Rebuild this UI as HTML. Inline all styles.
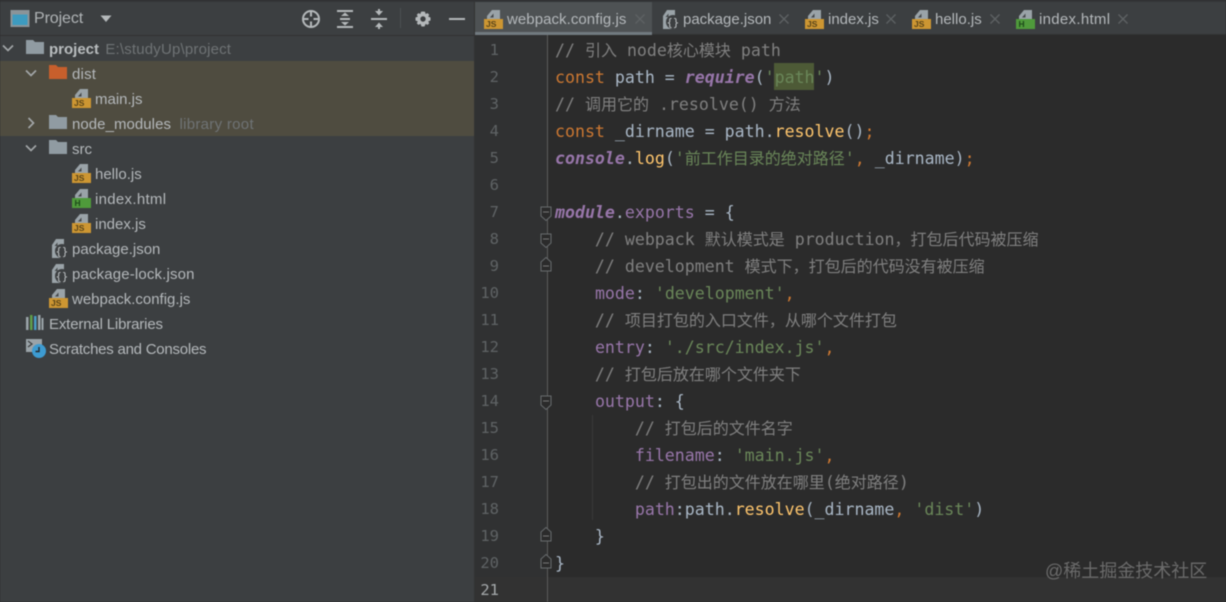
<!DOCTYPE html>
<html lang="zh"><head><meta charset="utf-8"><title>webpack.config.js</title>
<style>
html,body{margin:0;padding:0;background:#2b2b2b}
#r{position:relative;width:1226px;height:602px;overflow:hidden;background:#2b2b2b;font-family:"Liberation Sans","Noto Sans CJK SC",sans-serif;filter:blur(.4px)}
.a{position:absolute}
.t{position:absolute;font-size:15px;line-height:20px;color:#b4b8bb;white-space:nowrap}
.g{color:#6f7375}
.ic{position:absolute;width:20px;height:20px}
.tab{position:absolute;top:5px;font-size:15px;line-height:30px;color:#b4b8bb;white-space:nowrap}
.x{position:absolute;top:13px;width:12px;height:12px}
.l{position:absolute;left:555px;height:27px;line-height:27px;font-family:"DejaVu Sans Mono","Liberation Mono",monospace;font-size:16.58px;white-space:pre;color:#a9b7c6}
.l i{font-family:"Noto Sans CJK SC",sans-serif;font-size:16px;font-style:normal;line-height:0}
.n{position:absolute;left:475px;width:24px;text-align:right;height:27px;line-height:27px;font-family:"DejaVu Sans Mono",monospace;font-size:15.5px;color:#5f6365}
.c{color:#808080}.k{color:#cc7832}.s{color:#6a8759}.p{color:#9876aa}.f{color:#ffc66d}
.b{font-weight:bold;font-style:italic;color:#9876aa}
</style></head><body><div id="r">
<svg width="0" height="0" style="position:absolute">
<defs>
<symbol id="js" viewBox="0 0 20 20"><path d="M4 10V7L9 1H17V10z" fill="#9aa3a8"/><path d="M7 8.500 10.500 4.500V8.500z" fill="#45484a"/><rect x="1" y="10" width="19" height="10" fill="#cd9632"/><text x="3" y="18" font-family="Liberation Sans" font-size="8.500" font-weight="bold" fill="#5a4519">JS</text></symbol>
<symbol id="ht" viewBox="0 0 20 20"><path d="M4 10V7L9 1H17V10z" fill="#9aa3a8"/><path d="M7 8.500 10.500 4.500V8.500z" fill="#45484a"/><rect x="1" y="10" width="19" height="10" fill="#4f9a3b"/><text x="3.500" y="18" font-family="Liberation Sans" font-size="8.500" font-weight="bold" fill="#1d4a1a">H</text></symbol>
<symbol id="js2" viewBox="0 0 20 20"><path d="M2 7 6 1H14V20H2z" fill="#9aa3a8"/><path d="M4.500 8 7.500 4.500V8z" fill="#45484a"/><circle cx="12" cy="13" r="7" fill="#3c3f41"/><text x="5.500" y="17" font-family="DejaVu Sans Mono" font-size="10.500" fill="#c4c8ca">{}</text></symbol>
<symbol id="fo" viewBox="0 0 20 20"><path d="M1 3h7l2 2h9v12H1z" fill="#909ba2"/></symbol>
<symbol id="xx" viewBox="0 0 12 12"><path d="M1.500 1.500 10.500 10.500M10.500 1.500 1.500 10.500" stroke="#5e6264" stroke-width="1.300"/></symbol>
<symbol id="dn" viewBox="0 0 12 12"><path d="M1 3.500 6 8.500 11 3.500" fill="none" stroke="#a4a8aa" stroke-width="1.600"/></symbol>
<symbol id="rt" viewBox="0 0 12 12"><path d="M3.500 1 8.500 6 3.500 11" fill="none" stroke="#a4a8aa" stroke-width="1.600"/></symbol>
<symbol id="fold" viewBox="0 0 14 18"><path d="M2 6 7 1.500 12 6V15H2z" fill="#2b2b2b" stroke="#686c6e" stroke-width="1"/><path d="M4 10H10" stroke="#777"/></symbol>
<symbol id="foldb" viewBox="0 0 14 18"><path d="M2 3H12V12L7 16.500 2 12z" fill="#2b2b2b" stroke="#686c6e" stroke-width="1"/><path d="M4 8H10" stroke="#777"/></symbol>
</defs></svg>

<!-- left panel -->
<div class="a" style="left:0;top:0;width:475px;height:602px;background:#3c3f41"></div>
<div class="a" style="left:0;top:0;width:1226px;height:2px;background:#333537"></div>
<div class="a" style="left:0;top:35px;width:475px;height:1px;background:#323232"></div>
<div class="a" style="left:0;top:61px;width:474px;height:75px;background:#4f4c40"></div>
<div class="a" style="left:474px;top:36px;width:1px;height:566px;background:#333"></div>
<div class="a" style="left:474px;top:2px;width:1px;height:33px;background:#333"></div>

<!-- header -->
<svg class="a" style="left:10px;top:9px" width="20" height="19"><rect x="1.500" y="2" width="17" height="15" fill="#3d9bc0" stroke="#8a9499" stroke-width="2"/><rect x="1" y="2" width="18" height="3.500" fill="#8a9499"/></svg>
<div class="t" style="left:34px;top:9px;font-size:16px;color:#b0b4b6;letter-spacing:-.1px">Project</div>
<svg class="a" style="left:100px;top:15px" width="12" height="8"><path d="M0.500 0.500H11.500L6 7z" fill="#b4b8ba"/></svg>
<svg class="a" style="left:301px;top:9px" width="20" height="20" fill="none" stroke="#b4b8ba" stroke-width="2"><circle cx="10" cy="10" r="8"/><path d="M10 2V7.500M10 12.500V18M2 10H7.500M12.500 10H18"/></svg>
<svg class="a" style="left:336px;top:9px" width="18" height="20" fill="#b4b8ba"><rect x="1" y="1" width="16" height="2"/><rect x="1" y="17" width="16" height="2"/><rect x="4" y="9" width="10" height="2"/><path d="M5 7 9 3.500 13 7zM5 13 9 16.500 13 13z"/></svg>
<svg class="a" style="left:370px;top:9px" width="18" height="20" fill="#b4b8ba"><rect x="1" y="9" width="16" height="2"/><path d="M5 2H13L9 6.500zM5 18H13L9 13.500z"/><rect x="8" y="0" width="2" height="3"/><rect x="8" y="17" width="2" height="3"/></svg>
<div class="a" style="left:400px;top:8px;width:1px;height:20px;background:#4c5052"></div>
<svg class="a" style="left:414px;top:10px" width="18" height="18"><path d="M9 1.500 11 1.800 11.600 4 13.600 3.100 15.200 4.700 14.200 6.600 16.500 7.500V10.500L14.200 11.400 15.200 13.300 13.600 14.900 11.600 13.900 10.500 16.500H7.500L6.500 13.900 4.400 14.900 2.800 13.300 3.800 11.400 1.500 10.500V7.500L3.800 6.600 2.800 4.700 4.400 3.100 6.400 4 7 1.800z" fill="#b4b8ba"/><circle cx="9" cy="9" r="2.700" fill="#3c3f41"/></svg>
<div class="a" style="left:449px;top:18px;width:16px;height:2px;background:#b4b8ba"></div>

<!-- tree -->
<svg class="ic" style="left:2px;top:42px;width:12px;height:12px"><use href="#dn"/></svg>
<svg class="ic" style="left:25px;top:37px"><use href="#fo"/></svg>
<div class="t" style="left:49px;top:40px"><b style="color:#b9bdbf">project</b>&nbsp; <span class="g" style="margin-left:-2px;letter-spacing:.18px">E:\studyUp\project</span></div>

<svg class="ic" style="left:25px;top:67px;width:12px;height:12px"><use href="#dn"/></svg>
<svg class="a" style="left:48px;top:62px" width="20" height="20"><path d="M1 3h7l2 2h9v12H1z" fill="#c75f2c"/></svg>
<div class="t" style="left:72px;top:65px;letter-spacing:.2px">dist</div>

<svg class="ic" style="left:71px;top:88px"><use href="#js"/></svg>
<div class="t" style="left:95px;top:90px">main.js</div>

<svg class="ic" style="left:25px;top:117px;width:12px;height:12px"><use href="#rt"/></svg>
<svg class="ic" style="left:48px;top:112px"><use href="#fo"/></svg>
<div class="t" style="left:72px;top:115px;letter-spacing:.05px">node_modules&nbsp; <span class="g" style="letter-spacing:.3px">library root</span></div>

<svg class="ic" style="left:25px;top:142px;width:12px;height:12px"><use href="#dn"/></svg>
<svg class="ic" style="left:48px;top:137px"><use href="#fo"/></svg>
<div class="t" style="left:72px;top:140px">src</div>

<svg class="ic" style="left:71px;top:163px"><use href="#js"/></svg>
<div class="t" style="left:95px;top:165px">hello.js</div>
<svg class="ic" style="left:71px;top:188px"><use href="#ht"/></svg>
<div class="t" style="left:95px;top:190px;letter-spacing:.3px">index.html</div>
<svg class="ic" style="left:71px;top:213px"><use href="#js"/></svg>
<div class="t" style="left:95px;top:215px">index.js</div>
<svg class="ic" style="left:50px;top:238px"><use href="#js2"/></svg>
<div class="t" style="left:72px;top:240px">package.json</div>
<svg class="ic" style="left:50px;top:263px"><use href="#js2"/></svg>
<div class="t" style="left:72px;top:265px;letter-spacing:.15px">package-lock.json</div>
<svg class="ic" style="left:48px;top:288px"><use href="#js"/></svg>
<div class="t" style="left:72px;top:290px">webpack.config.js</div>

<svg class="a" style="left:25px;top:314px" width="20" height="18"><rect x="1" y="3" width="2.500" height="13" fill="#9aa3a8"/><rect x="5" y="1" width="2.500" height="15" fill="#5f9e4a"/><rect x="9" y="2" width="2.500" height="14" fill="#4a9cc4"/><rect x="13" y="1" width="2.500" height="15" fill="#9aa3a8"/><rect x="16.500" y="4" width="2" height="12" fill="#9aa3a8"/></svg>
<div class="t" style="left:49px;top:315px;letter-spacing:-.16px">External Libraries</div>
<svg class="a" style="left:25px;top:338px" width="22" height="22"><path d="M1 1H17V9H8V14H1z" fill="#9aa3a8"/><path d="M3 3 7 6 3 9" fill="none" stroke="#3c3f41" stroke-width="1.200"/><circle cx="14" cy="13" r="7" fill="#3d9bd1"/><path d="M14 9V13.500H10.500" fill="none" stroke="#23292d" stroke-width="1.400"/></svg>
<div class="t" style="left:49px;top:340px;letter-spacing:-.24px">Scratches and Consoles</div>

<!-- tab bar -->
<div class="a" style="left:475px;top:2px;width:751px;height:33px;background:#3c3f41"></div>
<div class="a" style="left:475px;top:2px;width:177px;height:30px;background:#4e5254"></div>
<div class="a" style="left:475px;top:32px;width:177px;height:3px;background:#717a80"></div>
<div class="a" style="left:652px;top:34px;width:574px;height:1px;background:#323232"></div>

<svg class="ic" style="left:483px;top:9px"><use href="#js"/></svg>
<div class="tab" style="left:507px;letter-spacing:.06px">webpack.config.js</div>
<svg class="x" style="left:634px"><use href="#xx"/></svg>
<svg class="ic" style="left:661px;top:9px"><use href="#js2"/></svg>
<div class="tab" style="left:683px">package.json</div>
<svg class="x" style="left:778px"><use href="#xx"/></svg>
<svg class="ic" style="left:804px;top:9px"><use href="#js"/></svg>
<div class="tab" style="left:828px">index.js</div>
<svg class="x" style="left:885px"><use href="#xx"/></svg>
<svg class="ic" style="left:911px;top:9px"><use href="#js"/></svg>
<div class="tab" style="left:935px">hello.js</div>
<svg class="x" style="left:989px"><use href="#xx"/></svg>
<svg class="ic" style="left:1015px;top:9px"><use href="#ht"/></svg>
<div class="tab" style="left:1039px;letter-spacing:.3px">index.html</div>
<svg class="x" style="left:1117px"><use href="#xx"/></svg>

<!-- gutter -->
<div class="a" style="left:475px;top:35px;width:72px;height:567px;background:#303132"></div>
<div class="a" style="left:475px;top:577px;width:751px;height:25px;background:#323232"></div>
<div class="a" style="left:547px;top:35px;width:1px;height:567px;background:#5c5c5c"></div>
<div class="a" style="left:592px;top:415px;width:1px;height:105px;background:#383838"></div>

<div class="n" style="top:37px">1</div><div class="n" style="top:64px">2</div><div class="n" style="top:91px">3</div><div class="n" style="top:118px">4</div><div class="n" style="top:145px">5</div><div class="n" style="top:172px">6</div><div class="n" style="top:199px">7</div><div class="n" style="top:226px">8</div><div class="n" style="top:253px">9</div><div class="n" style="top:280px">10</div><div class="n" style="top:307px">11</div><div class="n" style="top:334px">12</div><div class="n" style="top:361px">13</div><div class="n" style="top:388px">14</div><div class="n" style="top:415px">15</div><div class="n" style="top:442px">16</div><div class="n" style="top:469px">17</div><div class="n" style="top:496px">18</div><div class="n" style="top:523px">19</div><div class="n" style="top:550px">20</div><div class="n" style="top:577px;color:#a4a8aa">21</div>

<svg class="a" style="left:539px;top:204px" width="14" height="18"><use href="#foldb"/></svg>
<svg class="a" style="left:539px;top:231px" width="14" height="18"><use href="#foldb"/></svg>
<svg class="a" style="left:539px;top:256px" width="14" height="18"><use href="#fold"/></svg>
<svg class="a" style="left:539px;top:393px" width="14" height="18"><use href="#foldb"/></svg>
<svg class="a" style="left:539px;top:526px" width="14" height="18"><use href="#fold"/></svg>
<svg class="a" style="left:539px;top:553px" width="14" height="18"><use href="#fold"/></svg>

<!-- code -->
<div class="a" style="left:774px;top:63px;width:40px;height:27px;background:#4d5a36"></div>
<div class="l c" style="top:37px">// <i>引入</i> node<i>核心模块</i> path</div>
<div class="l" style="top:64px"><span class="k">const</span> path = <span class="b">require</span>(<span class="s">'path'</span>)</div>
<div class="l c" style="top:91px">// <i>调用它的</i> .resolve() <i>方法</i></div>
<div class="l" style="top:118px"><span class="k">const</span> _dirname = path.<span class="f">resolve</span>()<span class="k">;</span></div>
<div class="l" style="top:145px"><span class="b">console</span>.<span class="f">log</span>(<span class="s">'<i>前工作目录的绝对路径</i>'</span><span class="k">,</span> _dirname)<span class="k">;</span></div>
<div class="l" style="top:199px"><span class="b">module</span>.<span class="p">exports</span> = {</div>
<div class="l c" style="top:226px">    // webpack <i>默认模式是</i> production<i>，打包后代码被压缩</i></div>
<div class="l c" style="top:253px">    // development <i>模式下，打包后的代码没有被压缩</i></div>
<div class="l" style="top:280px">    <span class="p">mode</span>: <span class="s">'development'</span><span class="k">,</span></div>
<div class="l c" style="top:307px">    // <i>项目打包的入口文件，从哪个文件打包</i></div>
<div class="l" style="top:334px">    <span class="p">entry</span>: <span class="s">'./src/index.js'</span><span class="k">,</span></div>
<div class="l c" style="top:361px">    // <i>打包后放在哪个文件夹下</i></div>
<div class="l" style="top:388px">    <span class="p">output</span>: {</div>
<div class="l c" style="top:415px">        // <i>打包后的文件名字</i></div>
<div class="l" style="top:442px">        <span class="p">filename</span>: <span class="s">'main.js'</span><span class="k">,</span></div>
<div class="l c" style="top:469px">        // <i>打包出的文件放在哪里</i>(<i>绝对路径</i>)</div>
<div class="l" style="top:496px">        <span class="p">path</span>:path.<span class="f">resolve</span>(_dirname<span class="k">,</span> <span class="s">'dist'</span>)</div>
<div class="l" style="top:523px">    }</div>
<div class="l" style="top:550px">}</div>

<div class="a" style="left:1045px;top:559px;font-size:18px;line-height:24px;color:#6b6b6b;white-space:nowrap;font-family:'Liberation Sans','Noto Sans CJK SC',sans-serif">@稀土掘金技术社区</div>
</div></body></html>
